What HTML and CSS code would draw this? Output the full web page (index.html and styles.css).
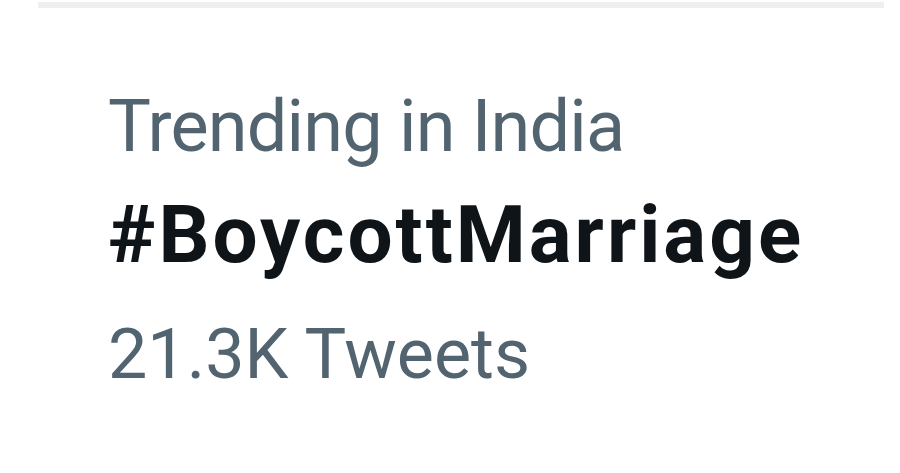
FILE: index.html
```html
<!DOCTYPE html>
<html>
<head>
<meta charset="utf-8">
<link rel="stylesheet" href="styles.css">
</head>
<body>
<div class="page">
  <div class="divider"></div>
  <div class="trend">
    <div class="meta">Trending in India</div>
    <div class="tag">#BoycottMarriage</div>
    <div class="count">21.3K Tweets</div>
  </div>
</div>
</body>
</html>
```
FILE: styles.css
```css
html, body {
  margin: 0;
  padding: 0;
  background: #ffffff;
}
.page {
  width: 900px;
  height: 473px;
  overflow: hidden;
  font-family: Roboto, "Liberation Sans", sans-serif;
}
.divider {
  margin: 2px 16px 0 38px;
  height: 6px;
  background: #efefef;
}
.trend {
  padding: 65px 0 0 108px;
  display: flex;
  flex-direction: column;
}
.meta {
  font-size: 72px;
  line-height: 108px;
  letter-spacing: -0.8px;
  color: #536471;
}
.tag {
  font-size: 80px;
  font-weight: 700;
  line-height: 108px;
  letter-spacing: 3px;
  color: #0f1419;
}
.count {
  margin-top: 11px;
  font-size: 70px;
  line-height: 108px;
  color: #536471;
}
```
